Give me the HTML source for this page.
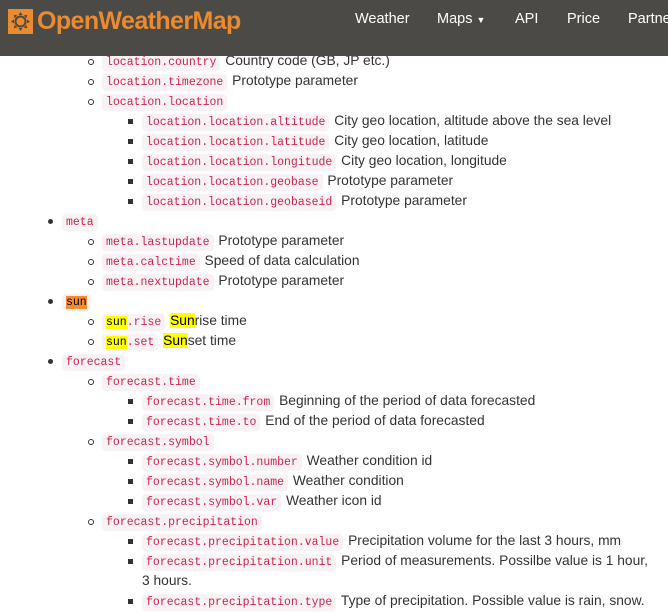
<!DOCTYPE html>
<html><head><meta charset="utf-8"><style>
body{margin:0;background:#fff;font-family:"Liberation Sans",sans-serif;font-size:13.8px;color:#333;width:668px;height:610px;overflow:hidden;position:relative}
.hd{position:absolute;left:0;top:0;width:668px;height:56px;background:#4b4a46;z-index:2}
.logo{position:absolute;left:37px;top:7px;font-size:25px;font-weight:bold;color:#eb8a2e;letter-spacing:-0.6px}
.ico{position:absolute;left:8px;top:9px;width:25px;height:25px;background:#eb8a2e}
.nav{position:absolute;top:11px;color:#fff;font-size:14.5px}
.c{position:absolute;left:0;top:51px;width:668px}
.l{height:20px;line-height:20px;position:relative;white-space:nowrap}
.l1{padding-left:62px}.l2{padding-left:102px}.l3{padding-left:142px}
.l1:before{content:"";position:absolute;left:48px;top:8px;width:5px;height:5px;border-radius:50%;background:#333}
.l2:before{content:"";position:absolute;left:88px;top:8px;width:4px;height:4px;border-radius:50%;border:1px solid #333}
.l3:before{content:"";position:absolute;left:128px;top:8px;width:5px;height:5px;background:#333}
code{font-family:"Liberation Mono",monospace;font-size:11.5px;color:#c7254e;background:#f9f2f4;padding:2px 4px;border-radius:4px;margin-right:1px}
.y{background:#ff0;color:#000}
.o{background:#f68b35;color:#000}
</style></head><body>
<div class="hd">
<div class="ico"><svg width="25" height="25" viewBox="0 0 25 25"><circle cx="12.5" cy="12.5" r="5" fill="none" stroke="#4b4a46" stroke-width="2"/><g fill="#4b4a46"><path d="M12.5 3l2 3h-4z"/><path d="M12.5 22l2-3h-4z"/><path d="M3 12.5l3-2v4z"/><path d="M22 12.5l-3-2v4z"/><path d="M5.8 5.8l3.5.7-2.8 2.8z"/><path d="M19.2 19.2l-3.5-.7 2.8-2.8z"/><path d="M19.2 5.8l-.7 3.5-2.8-2.8z"/><path d="M5.8 19.2l.7-3.5 2.8 2.8z"/></g></svg></div>
<div class="logo">OpenWeatherMap</div>
<div class="nav" style="left:355px">Weather</div>
<div class="nav" style="left:437px">Maps <span style="font-size:9px">&#9660;</span></div>
<div class="nav" style="left:515px">API</div>
<div class="nav" style="left:567px">Price</div>
<div class="nav" style="left:628px">Partners</div>
</div>
<div class="c">
<div class="l l2"><code>location.country</code> Country code (GB, JP etc.)</div>
<div class="l l2"><code>location.timezone</code> Prototype parameter</div>
<div class="l l2"><code>location.location</code></div>
<div class="l l3"><code>location.location.altitude</code> City geo location, altitude above the sea level</div>
<div class="l l3"><code>location.location.latitude</code> City geo location, latitude</div>
<div class="l l3"><code>location.location.longitude</code> City geo location, longitude</div>
<div class="l l3"><code>location.location.geobase</code> Prototype parameter</div>
<div class="l l3"><code>location.location.geobaseid</code> Prototype parameter</div>
<div class="l l1"><code>meta</code></div>
<div class="l l2"><code>meta.lastupdate</code> Prototype parameter</div>
<div class="l l2"><code>meta.calctime</code> Speed of data calculation</div>
<div class="l l2"><code>meta.nextupdate</code> Prototype parameter</div>
<div class="l l1"><code><span class="o">sun</span></code></div>
<div class="l l2"><code><span class="y">sun</span>.rise</code> <span class="y">Sun</span>rise time</div>
<div class="l l2"><code><span class="y">sun</span>.set</code> <span class="y">Sun</span>set time</div>
<div class="l l1"><code>forecast</code></div>
<div class="l l2"><code>forecast.time</code></div>
<div class="l l3"><code>forecast.time.from</code> Beginning of the period of data forecasted</div>
<div class="l l3"><code>forecast.time.to</code> End of the period of data forecasted</div>
<div class="l l2"><code>forecast.symbol</code></div>
<div class="l l3"><code>forecast.symbol.number</code> Weather condition id</div>
<div class="l l3"><code>forecast.symbol.name</code> Weather condition</div>
<div class="l l3"><code>forecast.symbol.var</code> Weather icon id</div>
<div class="l l2"><code>forecast.precipitation</code></div>
<div class="l l3"><code>forecast.precipitation.value</code> Precipitation volume for the last 3 hours, mm</div>
<div class="l l3"><code>forecast.precipitation.unit</code> Period of measurements. Possilbe value is 1 hour,</div>
<div class="l" style="padding-left:142px">3 hours.</div>
<div class="l l3"><code>forecast.precipitation.type</code> Type of precipitation. Possible value is rain, snow.</div>
</div>
</body></html>
